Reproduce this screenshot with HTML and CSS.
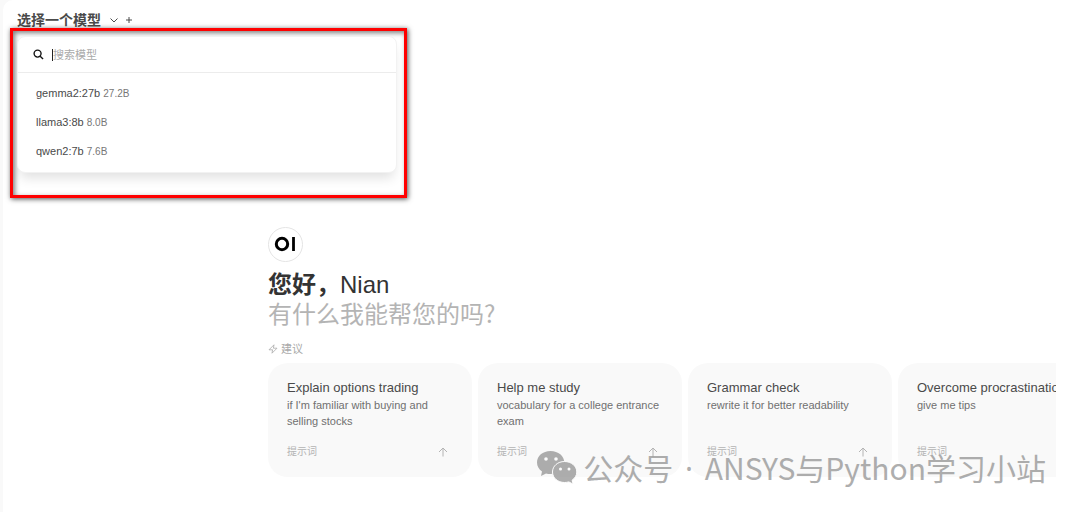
FILE: index.html
```html
<!DOCTYPE html>
<html lang="zh-CN">
<head>
<meta charset="utf-8">
<meta name="viewport" content="width=device-width, initial-scale=1">
<title>Open WebUI</title>
<link rel="stylesheet" href="styles.css">
</head>
<body>
<div class="app">
  <main class="main">
    <header class="header">
      <button class="model-button" type="button">选择一个模型
        <svg class="icon-chevron" viewBox="0 0 10 10" aria-hidden="true"><path d="M1.500 3.500 5 7 8.500 3.500"/></svg>
      </button>
      <button class="add-button" type="button" aria-label="添加模型">
        <svg class="icon-plus" viewBox="0 0 8 8" aria-hidden="true"><path d="M4 1v6M1 4h6"/></svg>
      </button>
      <div class="highlight">
        <div class="menu">
          <div class="search">
            <svg class="icon-search" viewBox="0 0 12 12" aria-hidden="true"><circle cx="5" cy="5" r="3.8"/><path d="M7.8 7.8 11 11"/></svg>
            <span class="caret"></span>
            <input class="search-input" type="text" placeholder="搜索模型" aria-label="搜索模型">
          </div>
          <div class="models">
            <button class="model" type="button">gemma2:27b <span class="size">27.2B</span></button>
            <button class="model" type="button">llama3:8b <span class="size">8.0B</span></button>
            <button class="model" type="button">qwen2:7b <span class="size">7.6B</span></button>
          </div>
        </div>
      </div>
    </header>

    <section class="welcome">
      <svg class="logo" viewBox="0 0 35 35" role="img" aria-label="OI">
        <circle cx="17.5" cy="17.5" r="17" fill="#fff" stroke="#e4e4e4"/>
        <circle cx="14" cy="17" r="5.700" fill="none" stroke="#000" stroke-width="3"/>
        <path d="M25.500 10v14" stroke="#000" stroke-width="2.800"/>
      </svg>
      <h1 class="greeting"><strong>您好，</strong>Nian</h1>
      <p class="question">有什么我能帮您的吗?</p>
      <h2 class="suggest-title">
        <svg class="icon-bolt" viewBox="0 0 10 10" aria-hidden="true"><path d="M6 .8 1 5.8h3.6L4 9.2l5-5H5.4Z"/></svg>
        建议
      </h2>
      <div class="cards">
        <button class="card" type="button">
          <span class="card-title">Explain options trading</span>
          <span class="card-text">if I'm familiar with buying and selling stocks</span>
          <span class="card-foot">提示词 <svg class="icon-arrow" viewBox="0 0 10 10" aria-hidden="true"><path d="M5 9.5V1M1 5l4-4 4 4"/></svg></span>
        </button>
        <button class="card" type="button">
          <span class="card-title">Help me study</span>
          <span class="card-text">vocabulary for a college entrance exam</span>
          <span class="card-foot">提示词 <svg class="icon-arrow" viewBox="0 0 10 10" aria-hidden="true"><path d="M5 9.5V1M1 5l4-4 4 4"/></svg></span>
        </button>
        <button class="card" type="button">
          <span class="card-title">Grammar check</span>
          <span class="card-text">rewrite it for better readability</span>
          <span class="card-foot">提示词 <svg class="icon-arrow" viewBox="0 0 10 10" aria-hidden="true"><path d="M5 9.5V1M1 5l4-4 4 4"/></svg></span>
        </button>
        <button class="card" type="button">
          <span class="card-title">Overcome procrastination</span>
          <span class="card-text">give me tips</span>
          <span class="card-foot">提示词 <svg class="icon-arrow" viewBox="0 0 10 10" aria-hidden="true"><path d="M5 9.5V1M1 5l4-4 4 4"/></svg></span>
        </button>
      </div>
    </section>
  </main>
  <div class="watermark">
    <svg class="wechat" viewBox="0 0 42 34" aria-hidden="true">
      <path d="M14.5 1C6.700 1 1 6 1 12.500c0 3.700 1.900 6.800 5 9L5 26l5-2.600c1.500.4 3 .6 4.500.6 7.800 0 13.800-5 13.800-11.500S22.300 1 14.500 1Z"/>
      <path class="bubble" d="M28.500 11.500C21.800 11.500 16.500 16 16.500 22s5.300 10.500 12 10.500c1.500 0 3-.2 4.300-.6l4.400 2.300-1.100-4c2.900-2 4.700-4.900 4.700-8.200 0-6-5.500-10.500-12.300-10.500Z"/>
      <g fill="#fff"><circle cx="10" cy="9" r="1.800"/><circle cx="20" cy="9" r="1.800"/><circle cx="24.500" cy="19" r="1.500"/><circle cx="33" cy="19" r="1.500"/></g>
    </svg>
    <span class="watermark-text">公众号 <span class="dot">·</span> ANSYS与Python学习小站</span>
  </div>
</div>
</body>
</html>
```
FILE: styles.css
```css
* { box-sizing: border-box; }

body {
  margin: 0;
  background: #f9f9f9;
  color: #4a4a4a;
  font-family: "Liberation Sans", "Noto Sans CJK SC", sans-serif;
}

button {
  margin: 0;
  padding: 0;
  border: 0;
  background: none;
  color: inherit;
  font: inherit;
  text-align: left;
}

svg { flex: none; fill: none; stroke: currentColor; }

.app {
  position: relative;
  min-height: 100vh;
  padding-left: 3px;
  overflow: hidden;
}

.main {
  min-height: 100vh;
  background: #fff;
  border-top-left-radius: 10px;
}

.header {
  position: relative;
  display: flex;
  align-items: center;
  gap: 6px;
  padding: 10px 14px 0;
}

.model-button {
  display: flex;
  align-items: center;
  gap: 8px;
  font-size: 14px;
  font-weight: 700;
  line-height: 20px;
}

.add-button { display: flex; }
.icon-chevron { width: 10px; height: 10px; }
.icon-plus { width: 8px; height: 8px; }

.highlight {
  position: absolute;
  top: 28px;
  left: 7px;
  width: 397px;
  padding: 5px 7px 22px 4px;
  border: 3px solid #f00;
  box-shadow: 1px 1px 5px rgba(0, 0, 0, .7), inset 2px 2px 5px rgba(0, 0, 0, .5);
}

.menu {
  border: 1px solid #f2f2f2;
  border-radius: 8px;
  background: #fff;
  box-shadow: 0 8px 12px -3px rgba(0, 0, 0, .12);
}

.search {
  display: flex;
  align-items: center;
  height: 36px;
  padding: 0 15px;
  border-bottom: 1px solid #ececec;
}

.icon-search { width: 11px; height: 11px; margin-right: 8px; color: #111; stroke-width: 1.5; }
.caret { width: 1px; height: 12px; background: #222; }

.search-input {
  flex: 1;
  min-width: 0;
  padding: 0;
  border: 0;
  outline: 0;
  background: none;
  font: inherit;
  font-size: 11px;
}

.search-input::placeholder { color: #aaa; opacity: 1; }

.models { display: flex; flex-direction: column; padding: 6px 18px; }
.model { font-size: 11px; line-height: 29px; }
.size { color: #777; font-size: 10px; line-height: 1; }

.welcome { padding: 197px 24px 0 265px; }
.logo { display: block; width: 35px; height: 35px; }

.greeting,
.question {
  margin: 0;
  font-size: 24px;
  font-weight: 400;
  line-height: 28px;
}

.greeting { margin-top: 9px; color: #333; }
.question { color: #b4b4b4; font-family: "Noto Sans CJK SC", sans-serif; }

.suggest-title {
  display: flex;
  align-items: center;
  gap: 3px;
  margin: 14px 0 6px;
  color: #aaa;
  font-size: 11px;
  font-weight: 400;
  line-height: 16px;
}

.icon-bolt { width: 10px; height: 10px; stroke-width: .8; }

.cards { display: flex; gap: 6px; overflow: hidden; }

.card {
  flex: none;
  display: flex;
  flex-direction: column;
  width: 204px;
  height: 114px;
  padding: 16px 19px 17px;
  border-radius: 20px;
  background: #f9f9f9;
}

.card-title { font-size: 13px; line-height: 18px; white-space: nowrap; }
.card-text { color: #707070; font-size: 11px; line-height: 16px; }

.card-foot {
  display: flex;
  align-items: center;
  justify-content: space-between;
  margin-top: auto;
  padding-right: 5px;
  color: #b4b4b4;
  font-size: 10px;
  line-height: 16px;
}

.icon-arrow { width: 10px; height: 10px; }

.watermark {
  position: absolute;
  right: 34px;
  bottom: 25px;
  display: flex;
  align-items: center;
  gap: 5px;
  color: #828282;
  font-family: "Noto Sans CJK SC", sans-serif;
  font-size: 30px;
  line-height: 40px;
  white-space: nowrap;
  opacity: .64;
  pointer-events: none;
}

.dot { margin: 0 5px; font-family: "Noto Sans", sans-serif; line-height: 1; }
.wechat { width: 42px; height: 34px; fill: currentColor; stroke: none; }
.bubble { stroke: #fff; stroke-width: 1; }
```
